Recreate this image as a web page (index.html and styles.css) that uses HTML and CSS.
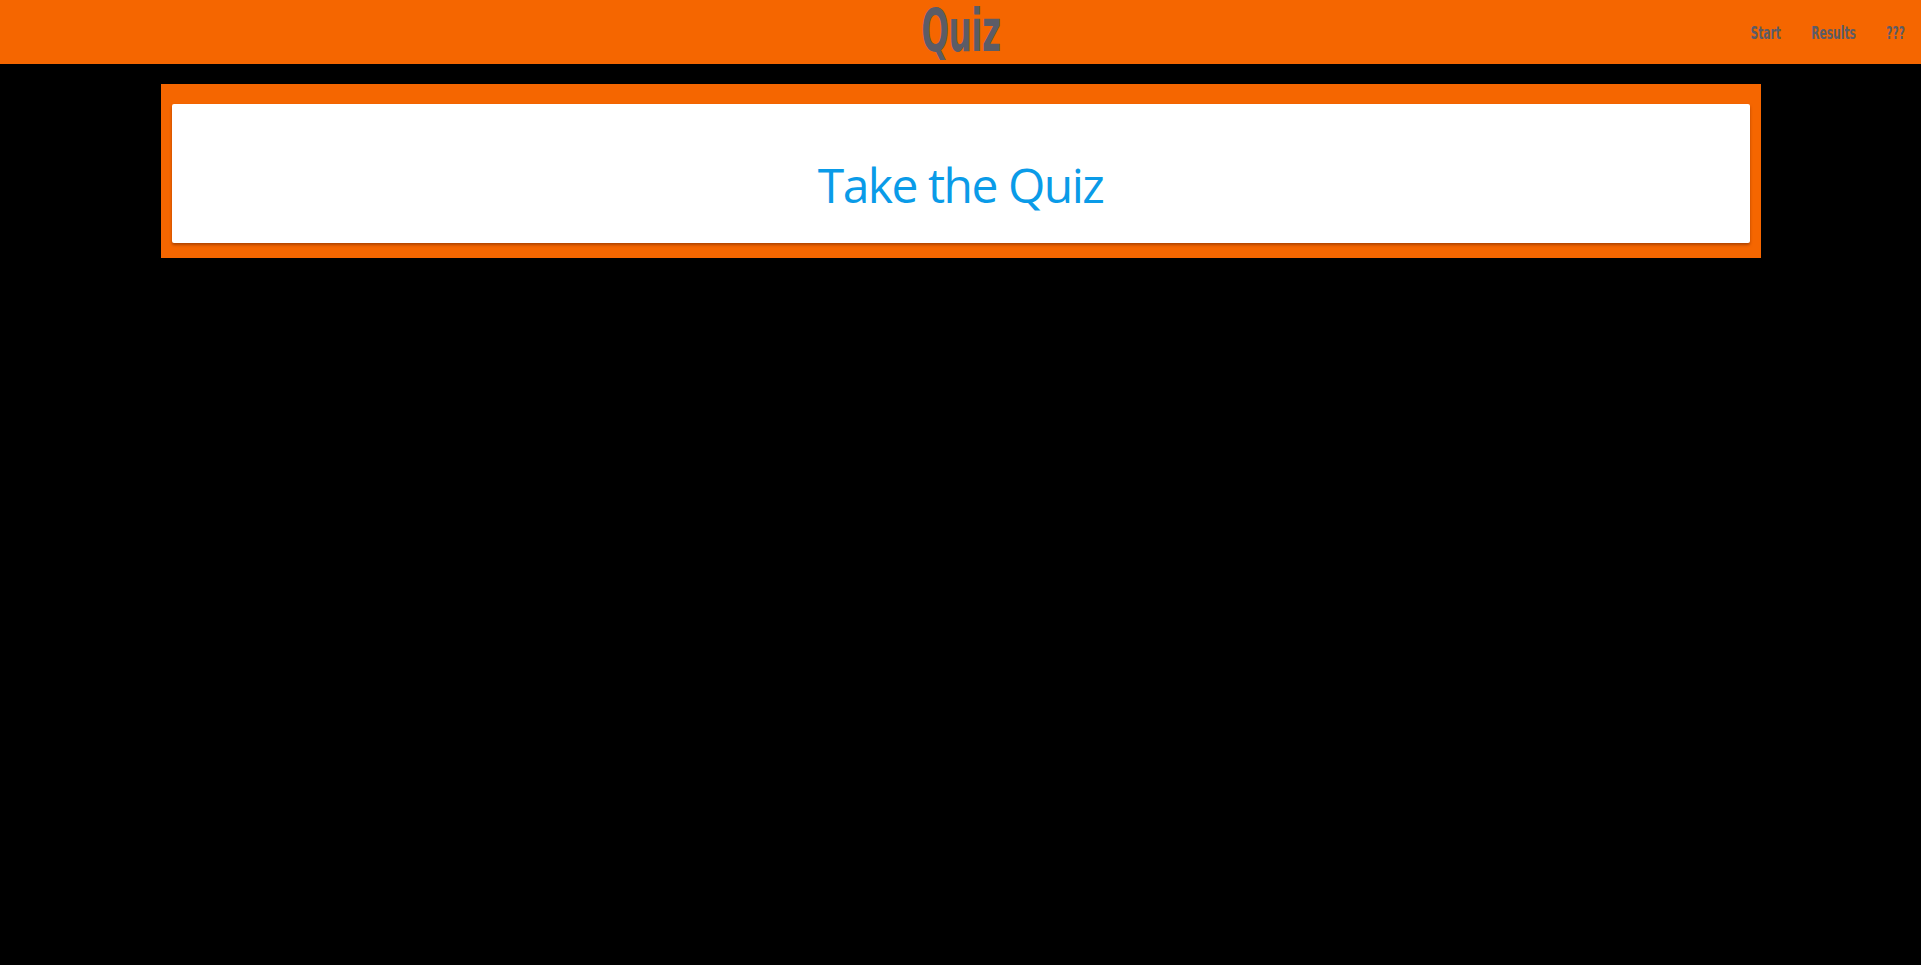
FILE: index.html
```html
<!DOCTYPE html>
<html lang="en">
<head>
<meta charset="utf-8">
<title>Quiz</title>
<link rel="stylesheet" href="styles.css">
</head>
<body>
<header class="topbar">
  <div class="brand"><span class="brand-text">Quiz</span></div>
  <nav class="nav">
    <a class="nav-link" href="#">Start</a>
    <a class="nav-link" href="#">Results</a>
    <a class="nav-link" href="#">???</a>
  </nav>
</header>
<main class="main">
  <section class="frame">
    <div class="card">
      <h1 class="card-title">Take the Quiz</h1>
    </div>
  </section>
</main>
</body>
</html>
```

FILE: styles.css
```css
html, body {
  margin: 0;
  padding: 0;
  background: #000;
  height: 100%;
}
body {
  font-family: "Open Sans", "Noto Sans", sans-serif;
}
.topbar {
  height: 64px;
  background: #f56600;
  display: flex;
  align-items: center;
  justify-content: center;
  position: relative;
}
.brand {
  display: flex;
  align-items: center;
  justify-content: center;
}
.brand-text {
  display: inline-block;
  font-family: "DejaVu Sans", sans-serif;
  font-stretch: condensed;
  font-weight: bold;
  font-size: 58px;
  line-height: 64px;
  color: #5b5c66;
  transform: scaleX(0.63);
  letter-spacing: -1px;
  margin-top: -2px;
}
.nav {
  position: absolute;
  right: 16px;
  top: 0;
  height: 64px;
  display: flex;
  align-items: center;
  gap: 46px;
  transform: scaleX(0.66);
  transform-origin: right center;
}
.nav-link {
  font-family: "DejaVu Sans", sans-serif;
  font-stretch: condensed;
  font-weight: bold;
  font-size: 18px;
  color: #5b5c66;
  text-decoration: none;
  margin-top: 1px;
}
.main {
  padding-top: 20px;
}
.frame {
  width: 1600px;
  margin: 0 auto;
  background: #f56600;
  padding: 20px 11px 15px;
  box-sizing: border-box;
}
.card {
  background: #fff;
  height: 139px;
  border-radius: 2px;
  box-shadow: 0 2px 3px rgba(120, 40, 0, 0.55);
  display: flex;
  align-items: center;
  justify-content: center;
}
.card-title {
  margin: 22px 0 0;
  font-weight: 400;
  font-size: 48px;
  color: #0a9be8;
  letter-spacing: -1.5px;
}
```
